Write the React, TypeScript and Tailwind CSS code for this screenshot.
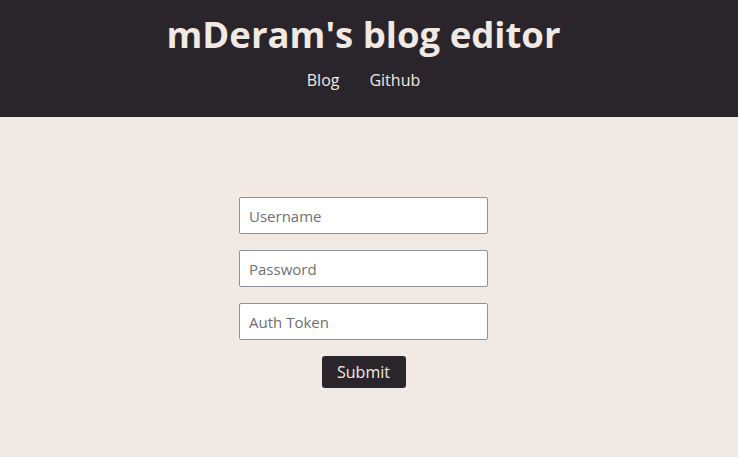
import React from 'react';

const font = { fontFamily: '"Open Sans", "DejaVu Sans", sans-serif' };

const inputClass =
  'w-[249px] h-[37px] px-[9px] bg-white border border-[#8f8f9d] rounded-[2px] text-[15px] placeholder:text-[#707070] outline-none';

const App: React.FC = () => {
  return (
    <div className="min-h-[457px] bg-[#f1e9e4]" style={font}>
      <header className="h-[117px] bg-[#2a252b] flex flex-col items-center pr-[11px]">
        <h1 className="mt-[10px] text-[36.5px] leading-[48px] font-bold text-[#f1e9e4]">
          mDeram's blog editor
        </h1>
        <nav className="mt-[10px] flex gap-[30px] text-[16px] leading-[24px] text-[#f1e9e4]">
          <a href="#">Blog</a>
          <a href="#">Github</a>
        </nav>
      </header>

      <form className="pt-[80px] pr-[11px] flex flex-col items-center gap-4">
        <input type="text" placeholder="Username" className={inputClass} />
        <input type="password" placeholder="Password" className={inputClass} />
        <input type="text" placeholder="Auth Token" className={inputClass} />
        <button
          type="button"
          className="w-[84px] h-[32px] bg-[#2a252b] text-[#f1e9e4] text-[16px] rounded-[3px]"
        >
          Submit
        </button>
      </form>
    </div>
  );
};

export default App;
